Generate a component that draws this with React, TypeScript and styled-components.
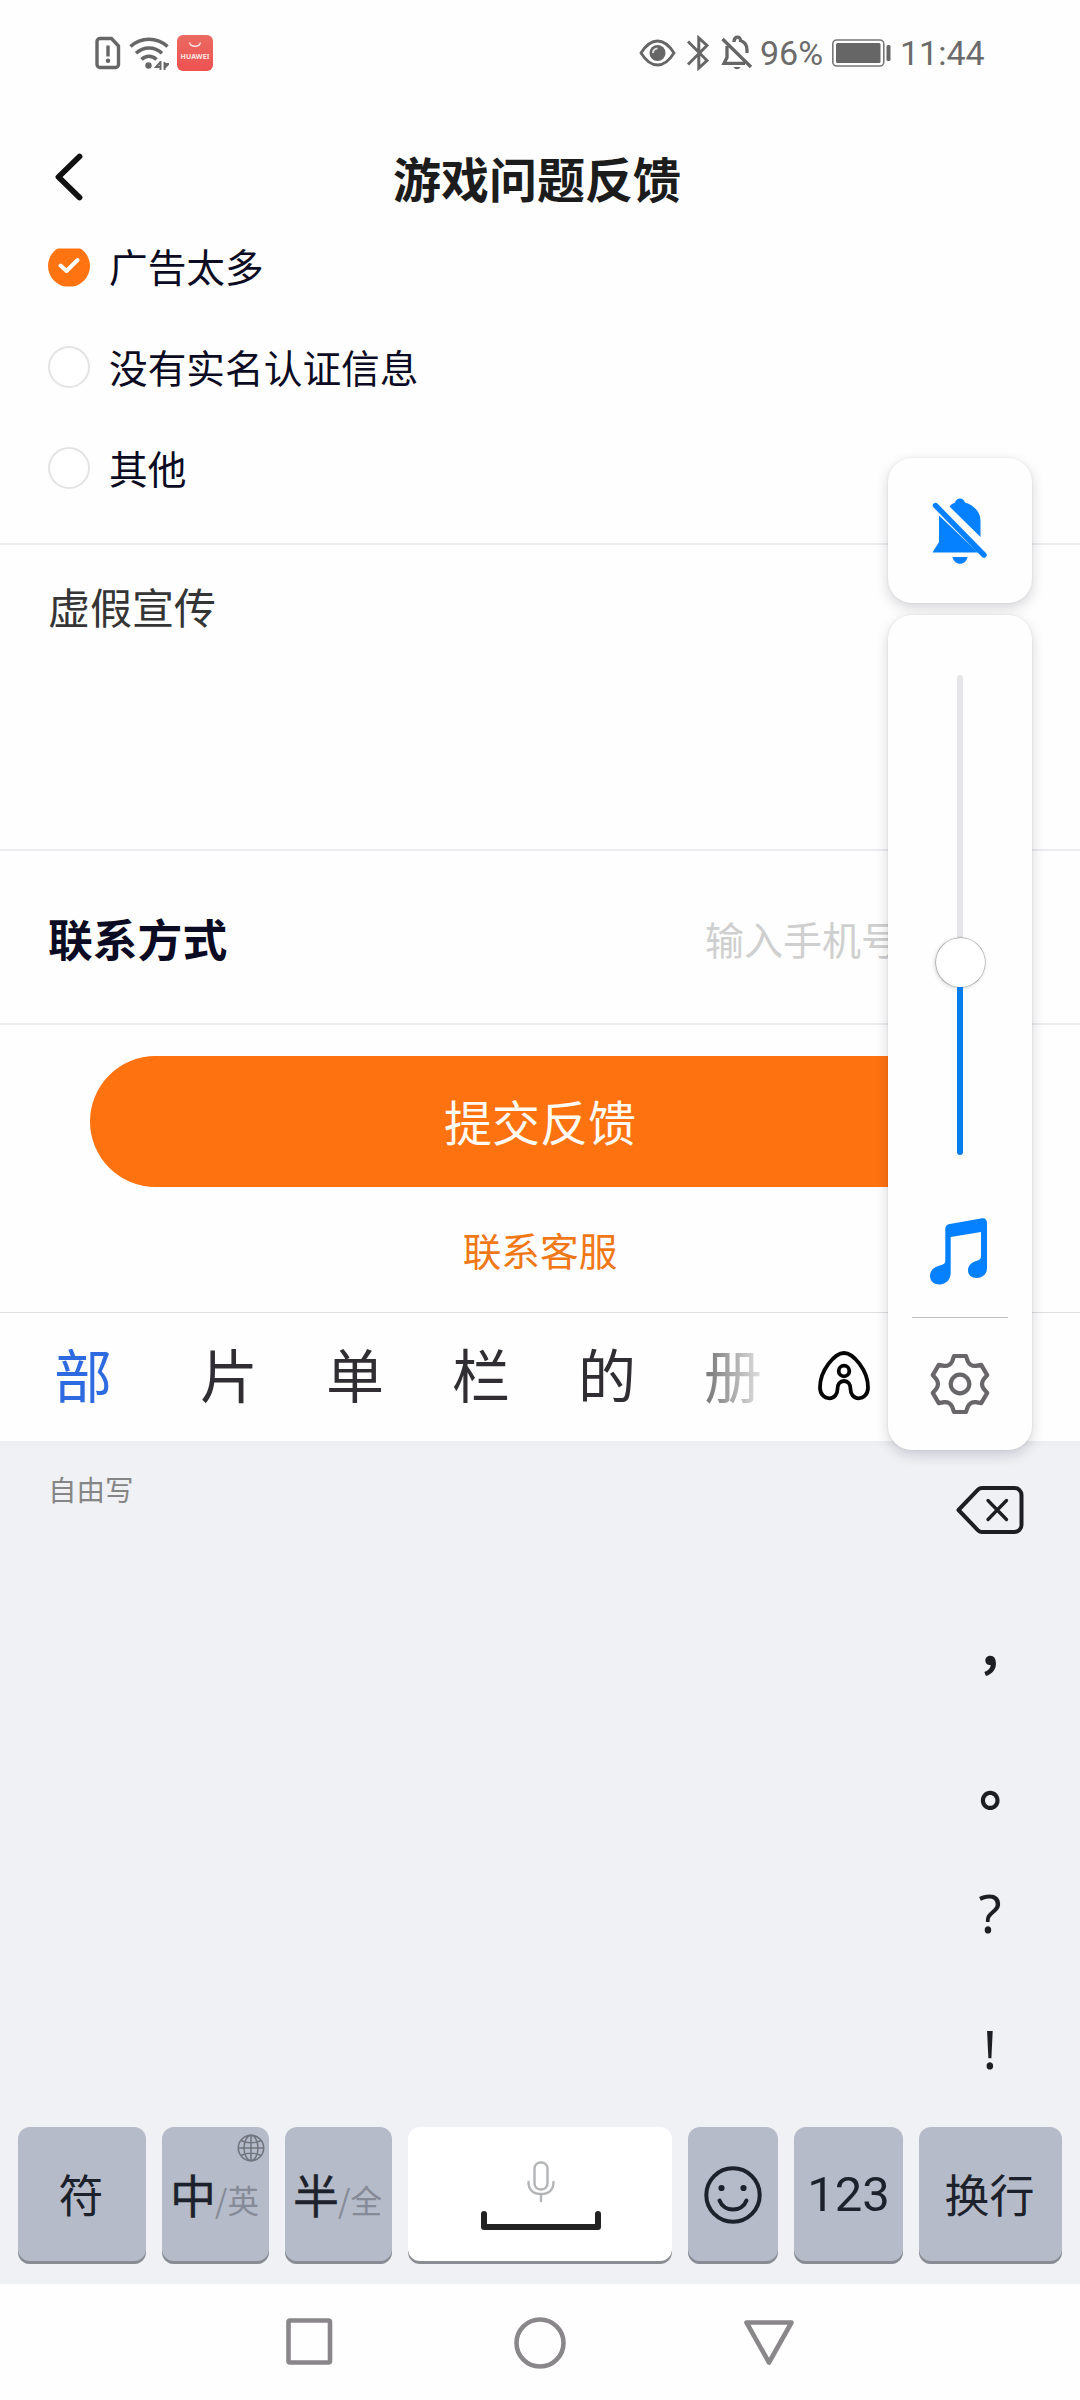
import React from "react";
import styled, { createGlobalStyle } from "styled-components";

const GlobalStyle = createGlobalStyle`
  * { box-sizing: border-box; }
  body { margin: 0; background: #fefefe; }
  svg { display: block; flex: none; }
`;

const Screen = styled.div`
  position: relative;
  width: 1080px;
  height: 2400px;
  display: flex;
  flex-direction: column;
  overflow: hidden;
  background: #fefefe;
  color: #0b0b23;
  font-family: "Noto Sans CJK SC", sans-serif;
`;

/* ---------- status bar ---------- */
const StatusBar = styled.div`
  flex: none;
  height: 106px;
  padding: 0 97px 0 95px;
  display: flex;
  justify-content: space-between;
  align-items: center;
`;
const StatusGroup = styled.div`
  display: flex;
  align-items: center;
`;
const StatusText = styled.span<{ $width: number; $gap: number }>`
  width: ${(p) => p.$width}px;
  margin-left: ${(p) => p.$gap}px;
  font: 400 34px/40px Roboto, sans-serif;
  color: #6b6b6b;
  white-space: nowrap;
`;
const StoreBadge = styled.div`
  width: 36px;
  height: 36px;
  margin-left: 8px;
  border-radius: 6px;
  background: linear-gradient(#ea6a61, #ee5151);
  display: flex;
  flex-direction: column;
  align-items: center;
  color: #fde6e2;
  font: 700 7px/8px "Noto Sans", sans-serif;
  letter-spacing: 0.1px;
`;

/* ---------- header ---------- */
const Header = styled.header`
  flex: none;
  height: 143px;
  padding: 0 54px 2px;
  display: grid;
  grid-template-columns: 30px 1fr 36px;
  align-items: center;
`;
const Title = styled.h1`
  margin: 0;
  text-align: center;
  font-size: 48px;
  line-height: 60px;
  font-weight: 700;
  color: #1c1c1c;
`;

/* ---------- form ---------- */
const Options = styled.div`
  flex: none;
  height: 296px;
  border-bottom: 2px solid #ebecef;
`;
const OptionList = styled.div`
  margin-top: -34px;
  padding-left: 48px;
`;
const Option = styled.label`
  height: 101px;
  display: flex;
  align-items: center;
  gap: 19px;
`;
const OptionText = styled.span`
  padding-bottom: 2px;
  font-size: 38.7px;
  line-height: 32px;
`;
/* the checked option is scrolled slightly under the header, so its top is shaved */
const Radio = styled.span<{ $checked?: boolean }>`
  width: 42px;
  height: 42px;
  border-radius: 50%;
  border: ${(p) => (p.$checked ? "none" : "2.5px solid #e3e3e3")};
  background: ${(p) => (p.$checked ? "#ff7410" : "#fff")};
  clip-path: ${(p) => (p.$checked ? "inset(4px 0 0 0)" : "none")};
  display: flex;
  align-items: center;
  justify-content: center;
`;
const Detail = styled.div`
  flex: none;
  height: 306px;
  padding: 31px 48px;
  border-bottom: 2px solid #ebecef;
  font-size: 42px;
  line-height: 60px;
  color: #353535;
`;
const ContactRow = styled.div`
  flex: none;
  height: 174px;
  padding: 1px 0 0 48px;
  display: flex;
  align-items: center;
  border-bottom: 2px solid #ebecef;
`;
const ContactLabel = styled.span`
  width: 657px;
  font-size: 44.8px;
  font-weight: 700;
`;
const ContactHint = styled.span`
  font-size: 39px;
  color: #cfcfcf;
`;
const Submit = styled.button`
  flex: none;
  width: 900px;
  height: 131px;
  margin: 31px auto 0;
  padding: 0 0 3px;
  border: 0;
  border-radius: 66px;
  background: #ff7210;
  color: #fffaf2;
  font: 400 48px/60px "Noto Sans CJK SC", sans-serif;
`;
const Service = styled.div`
  flex: none;
  height: 125px;
  padding-bottom: 2px;
  display: flex;
  align-items: center;
  justify-content: center;
  font-size: 38.7px;
  color: #f07817;
`;

/* ---------- keyboard ---------- */
const Candidates = styled.div`
  flex: none;
  height: 129px;
  padding: 0 0 8px 20px;
  display: flex;
  align-items: center;
  border-top: 1px solid #dfdfe2;
`;
const Candidate = styled.span<{ $tone?: "active" | "fade" }>`
  width: 126px;
  text-align: center;
  font-size: 58px;
  line-height: 80px;
  color: ${(p) => (p.$tone === "active" ? "#2f6be0" : "#302e32")};
  ${(p) =>
    p.$tone === "fade" &&
    `background: linear-gradient(90deg, #777 28%, #e0e0e0 72%);
     -webkit-background-clip: text;
     background-clip: text;
     color: transparent;`}
`;
const CandidateStrip = styled.div`
  display: flex;
  margin-left: 20px;
`;
const Keyboard = styled.div`
  flex: none;
  height: 843px;
  padding: 0 18px 20px;
  display: flex;
  flex-direction: column;
  justify-content: space-between;
  background: #f0f1f5;
  border-top: 5px solid #edeef2;
`;
const WritingArea = styled.div`
  display: flex;
  justify-content: space-between;
`;
const ModeHint = styled.span`
  padding: 23px 0 0 30px;
  font-size: 28.5px;
  line-height: 40px;
  color: #858585;
`;
const Punctuation = styled.div`
  width: 143px;
  padding: 39px 1px 0 0;
  display: flex;
  flex-direction: column;
  align-items: center;
`;
const Mark = styled.span<{ $top: number; $cjk?: boolean; $shift?: number; $size?: number }>`
  height: 60px;
  margin-top: ${(p) => p.$top}px;
  transform: translateX(${(p) => p.$shift ?? 0}px);
  font: ${(p) => (p.$cjk ? 700 : 400)} ${(p) => p.$size ?? 53}px/60px
    ${(p) => (p.$cjk ? '"Noto Sans CJK SC"' : '"Noto Sans"')}, sans-serif;
  color: #1c1e24;
`;
const KeyRow = styled.div`
  display: flex;
  gap: 16px;
`;
const Key = styled.div<{ $width: number; $light?: boolean }>`
  position: relative;
  width: ${(p) => p.$width}px;
  height: 137px;
  padding-bottom: 3px;
  border-radius: 12px;
  background: ${(p) => (p.$light ? "#fff" : "#b5bbc8")};
  box-shadow: inset 0 -3px 0 #898c93;
  display: flex;
  flex-direction: ${(p) => (p.$light ? "column" : "row")};
  align-items: center;
  justify-content: center;
  white-space: nowrap;
  color: #1c212b;
  font-size: 45px;
  line-height: 60px;
`;
const Glyphs = styled.span`
  padding: 0 2px 1px 0;
`;
const Primary = styled.span`
  padding-bottom: 3px;
  font-size: 46px;
  -webkit-text-stroke: 0.4px #1c212b;
`;
const Digits = styled.span`
  padding-top: 2px;
  font-family: Roboto, sans-serif;
  font-size: 49px;
`;
const Minor = styled.small`
  margin-top: 10px;
  margin-left: -1px;
  padding-right: 2px;
  font-size: 31.5px;
  color: #858a96;
`;
const KeyCorner = styled.span`
  position: absolute;
  top: 7px;
  right: 4px;
`;

/* ---------- system navigation ---------- */
const NavBar = styled.nav`
  flex: 1;
  padding: 1px 284px 0;
  display: flex;
  align-items: center;
  justify-content: space-between;
`;

/* ---------- volume overlay ---------- */
const VolumeOverlay = styled.div`
  position: absolute;
  left: 888px;
  top: 458px;
  width: 144px;
  display: flex;
  flex-direction: column;
  gap: 12px;
`;
const OverlayCard = styled.div<{ $height: number }>`
  height: ${(p) => p.$height}px;
  border-radius: 24px;
  background: #fefeff;
  box-shadow: 0 5px 14px rgba(0, 0, 30, 0.16), 0 0 3px rgba(0, 0, 30, 0.08);
  display: flex;
  flex-direction: column;
  align-items: center;
`;
const BellSlot = styled.div`
  padding-top: 39px;
`;
const Track = styled.div`
  margin-top: 60px;
  height: 481px;
  width: 49px;
  display: flex;
  flex-direction: column;
  align-items: center;
`;
const TrackPart = styled.div<{ $height: number; $filled?: boolean }>`
  width: 6px;
  height: ${(p) => p.$height}px;
  background: ${(p) => (p.$filled ? "#067ded" : "#e6e6e8")};
  border-radius: ${(p) => (p.$filled ? "0 0 3px 3px" : "3px 3px 0 0")};
`;
const Thumb = styled.div`
  width: 49px;
  height: 49px;
  border-radius: 50%;
  background: #fff;
  box-shadow: 0 0 1px 0.5px rgba(0, 0, 0, 0.4), -1px 1px 4px rgba(0, 0, 0, 0.18);
`;
const MusicSlot = styled.div`
  margin-top: 62px;
  padding-right: 3px;
`;
const Rule = styled.div`
  width: 96px;
  height: 1px;
  margin: 32px 0 36px;
  background: #c0c0c4;
`;

/* ---------- icons ---------- */
const SimIcon = () => (
  <svg width="26" height="34" viewBox="0 0 26 34" fill="none" stroke="#666" strokeWidth="3.4">
    <path d="M5 2.5h11.5l7 7.5V28.500a3 3 0 0 1-3 3H5a3 3 0 0 1-3-3V5.500a3 3 0 0 1 3-3Z" />
    <path d="M13 9.500v11" />
    <circle cx="13" cy="24.800" r="2.300" fill="#666" stroke="none" />
  </svg>
);

const WifiSvg = styled.svg`
  margin-left: 8px;
`;
const WifiIcon = () => (
  <WifiSvg width="40" height="34" viewBox="0 0 40 34" fill="none" stroke="#666" strokeWidth="3.600">
    <path d="M1.500 10.500C12 .8 28 .8 38.500 10.500M7 17.200c7.500-7 18.500-7 26 0M12.500 23.500c4.500-4.300 10.500-4.300 15 0" />
    <circle cx="19.500" cy="29.500" r="3.200" fill="#666" stroke="none" />
    <path d="M31.500 25v9M31.500 26l-4.500 5h4.500M35.500 26v8M35.500 32l4-4h-4" strokeWidth="1.900" />
  </WifiSvg>
);

const EyeIcon = () => (
  <svg width="37" height="28" viewBox="0 0 37 28" fill="none" stroke="#666" strokeWidth="2.800">
    <path d="M2 14C7 6 12 2 18.500 2S30 6 35 14c-5 8-10 12-16.500 12S7 22 2 14Z" />
    <circle cx="18.500" cy="14" r="8" fill="#666" stroke="none" />
    <path d="M14 14a4.500 4.500 0 0 1 4.500-4.500" stroke="#ddd" strokeWidth="2" />
  </svg>
);

const BluetoothSvg = styled.svg`
  margin-left: 11px;
`;
const BluetoothIcon = () => (
  <BluetoothSvg width="22" height="36" viewBox="0 0 22 36" fill="none" stroke="#666" strokeWidth="3">
    <path d="M1 6.500 20 25.500 11.800 33V3L20 10.500 1 29.500" />
  </BluetoothSvg>
);

const BellSvg = styled.svg`
  margin-left: 12px;
`;
const BellOffSmall = () => (
  <BellSvg width="32" height="36" viewBox="0 0 32 36" fill="none" stroke="#666" strokeWidth="3.300">
    <path d="M1.500 4 30 32M6 11v11.500L3 28.300H24M13 7C13 .8 19.500 .8 19.500 5.500c4.500 1.500 6.500 5 6.500 9.500v3" />
    <path d="M12.500 32h7c-1.500 3-5.500 3-7 0Z" fill="#666" stroke="none" />
  </BellSvg>
);

const BatterySvg = styled.svg`
  margin-left: 10px;
`;
const BatteryIcon = () => (
  <BatterySvg width="59" height="28" viewBox="0 0 59 28">
    <rect x=".8" y="1" width="51" height="26" rx="4" fill="none" stroke="#777" strokeWidth="1.600" />
    <rect x="4" y="4" width="44.500" height="20" rx="1.500" fill="#666" />
    <rect x="54.500" y="6" width="4" height="16" rx="1.500" fill="#666" />
  </BatterySvg>
);

const BackIcon = () => (
  <svg width="30" height="50" viewBox="0 0 30 50" fill="none" stroke="#111" strokeWidth="5.800" strokeLinecap="round" strokeLinejoin="round">
    <path d="M25.500 4.500 4.500 25l21 20.500" />
  </svg>
);

const CheckIcon = () => (
  <svg width="22" height="17" viewBox="0 0 22 17" fill="none" stroke="#fff" strokeWidth="4" strokeLinecap="round" strokeLinejoin="round">
    <path d="m2.500 8.500 6 5.500 11-11" />
  </svg>
);

const BellOffLarge = () => (
  <svg width="58" height="68" viewBox="0 0 58 68">
    <path
      d="M8 18.500V45L1.500 55.500H47L8 18.500ZM18.500 9.500 49.500 40V24c0-9-6-15.500-15.500-18.500C32.500 0 25.500 0 24 5.500c-2 .8-4 2-5.500 4Z"
      fill="#0580fe"
    />
    <path d="M4.500 8.500 53 58" stroke="#0580fe" strokeWidth="5.400" strokeLinecap="round" />
    <path d="M21.500 60h15c-1.500 9-13.500 9-15 0Z" fill="#0580fe" />
  </svg>
);

const MusicIcon = () => (
  <svg width="58" height="67" viewBox="0 0 58 67" fill="#0580fe">
    <path d="M15.300 11c0-3 1.500-4.500 4.500-5L51 .4c4-.7 6 1 6 5V50c0 6-4.500 10-10.500 10-5 0-8.500-3-8.500-7.500 0-6 4.500-8.500 9-9.800 3-1 4-2 4-4.700V14L20.700 19v36c0 6.500-5 11.500-11 11.500C4 66.500 0 63 0 58c0-5.500 4-9 9-10.300 5-1.200 6.300-2.200 6.300-5.200Z" />
  </svg>
);

const polar = (radius: number, deg: number) => {
  const a = (deg * Math.PI) / 180;
  return `${(30 + radius * Math.sin(a)).toFixed(2)} ${(30 - radius * Math.cos(a)).toFixed(2)}`;
};
const gearPath =
  [0, 60, 120, 180, 240, 300]
    .map(
      (t, i) =>
        `${i ? "L" : "M"}${polar(28.6, t - 12)}L${polar(28.6, t + 12)}L${polar(24, t + 19)}Q${polar(20.5, t + 30)} ${polar(24, t + 41)}`
    )
    .join("") + "Z";

const GearIcon = () => (
  <svg width="60" height="60" viewBox="0 0 60 60" fill="none" stroke="#69666a" strokeWidth="4.200" strokeLinejoin="round">
    <path d={gearPath} />
    <circle cx="30" cy="30" r="9.300" />
  </svg>
);

const ArchSvg = styled.svg`
  margin: 5px 0 0 21px;
`;
const ArchIcon = () => (
  <ArchSvg width="54" height="52" viewBox="0 0 54 52" fill="none" stroke="#050505" strokeWidth="3.800">
    <path d="M27 3C36 3 51 20 51 37.500 51 44 47 48.300 41.500 48.300c-5 0-8-4.300-8-9.300 0-5-2.500-8-6.500-8s-6.500 3-6.500 8c0 5-3 9.300-8 9.300C7 48.300 3 44 3 37.500 3 20 18 3 27 3Z" />
    <circle cx="27" cy="21" r="5.300" />
  </ArchSvg>
);

const BackspaceIcon = () => (
  <svg width="68" height="50" viewBox="0 0 68 50" fill="none" stroke="#1c1e24" strokeLinecap="round" strokeLinejoin="round">
    <path d="M26 3h32.500a7 7 0 0 1 7 7v30a7 7 0 0 1-7 7H26c-2 0-3-.7-4-1.700L2.500 25 22 4.700C23 3.700 24 3 26 3Z" strokeWidth="4" />
    <path d="m32 15.500 18.500 19M50.500 15.500l-18.500 19" strokeWidth="3.300" />
  </svg>
);

const GlobeIcon = () => (
  <svg width="28" height="28" viewBox="0 0 28 28" fill="none" stroke="#70747d" strokeWidth="1.500">
    <circle cx="14" cy="14" r="12.700" />
    <ellipse cx="14" cy="14" rx="7" ry="12.700" />
    <path d="M14 1.300v25.400M1.300 14h25.400M4 6.500c6 3 14 3 20 0M4 21.500c6-3 14-3 20 0" />
  </svg>
);

const MicSvg = styled.svg`
  margin: 2px 0 0 2px;
`;
const MicIcon = () => (
  <MicSvg width="28" height="42" viewBox="0 0 28 42" fill="none" stroke="#b3b4b6" strokeWidth="2.400" strokeLinecap="round">
    <rect x="7.500" y="1.500" width="13" height="27" rx="6" />
    <path d="M1.500 21c0 8 5 12 12.500 12s12.500-4 12.500-12M14 33v7" />
  </MicSvg>
);

const SpaceSvg = styled.svg`
  margin: 8px 0 0 2px;
`;
const SpaceIcon = () => (
  <SpaceSvg width="120" height="19" viewBox="0 0 120 19" fill="none" stroke="#222" strokeWidth="6" strokeLinecap="round" strokeLinejoin="round">
    <path d="M3 3v13h114V3" />
  </SpaceSvg>
);

const SmileIcon = () => (
  <svg width="58" height="59" viewBox="0 -1 58 59" fill="none" stroke="#1c212b" strokeWidth="4" strokeLinecap="round">
    <circle cx="29" cy="29" r="26.700" />
    <circle cx="17.500" cy="22" r="3.100" fill="#1c212b" stroke="none" />
    <circle cx="39.500" cy="22" r="3.100" fill="#1c212b" stroke="none" />
    <path d="M15.500 34.500c4.500 12 22.500 12 27 0" />
  </svg>
);

const NavIcon = ({ children }: { children: React.ReactNode }) => (
  <svg width="54" height="54" viewBox="0 0 54 54" fill="none" stroke="#8a878a" strokeWidth="4.600" strokeLinejoin="round">
    {children}
  </svg>
);

const options = [
  { label: "广告太多", checked: true },
  { label: "没有实名认证信息", checked: false },
  { label: "其他", checked: false },
];

const candidates: { text: string; tone?: "active" | "fade" }[] = [
  { text: "片" },
  { text: "单" },
  { text: "栏" },
  { text: "的" },
  { text: "册", tone: "fade" },
];

export default function App() {
  return (
    <>
      <GlobalStyle />
      <Screen>
        <StatusBar>
          <StatusGroup>
            <SimIcon />
            <WifiIcon />
            <StoreBadge>
              <svg width="14" height="18" viewBox="0 0 14 18" fill="none" stroke="#fde6e2" strokeWidth="1.300">
                <path d="M1.500 7.500c1 5 10 5 11 0" />
              </svg>
              HUAWEI
            </StoreBadge>
          </StatusGroup>
          <StatusGroup>
            <EyeIcon />
            <BluetoothIcon />
            <BellOffSmall />
            <StatusText $width={62} $gap={7}>96%</StatusText>
            <BatteryIcon />
            <StatusText $width={83} $gap={9}>11:44</StatusText>
          </StatusGroup>
        </StatusBar>

        <Header>
          <BackIcon />
          <Title>游戏问题反馈</Title>
        </Header>

        <Options>
          <OptionList>
            {options.map((o) => (
              <Option key={o.label}>
                <Radio $checked={o.checked}>{o.checked && <CheckIcon />}</Radio>
                <OptionText>{o.label}</OptionText>
              </Option>
            ))}
          </OptionList>
        </Options>
        <Detail>虚假宣传</Detail>
        <ContactRow>
          <ContactLabel>联系方式</ContactLabel>
          <ContactHint>输入手机号</ContactHint>
        </ContactRow>
        <Submit>提交反馈</Submit>
        <Service>联系客服</Service>

        <Candidates>
          <Candidate $tone="active">部</Candidate>
          <CandidateStrip>
            {candidates.map((c) => (
              <Candidate key={c.text} $tone={c.tone}>{c.text}</Candidate>
            ))}
          </CandidateStrip>
          <ArchIcon />
        </Candidates>
        <Keyboard>
          <WritingArea>
            <ModeHint>自由写</ModeHint>
            <Punctuation>
              <BackspaceIcon />
              <Mark $top={77} $cjk>,</Mark>
              <Mark $top={78} $cjk $shift={18} $size={58}>。</Mark>
              <Mark $top={73}>?</Mark>
              <Mark $top={76}>!</Mark>
            </Punctuation>
          </WritingArea>
          <KeyRow>
            <Key $width={128}><Glyphs>符</Glyphs></Key>
            <Key $width={107}>
              <Primary>中</Primary><Minor>/英</Minor>
              <KeyCorner><GlobeIcon /></KeyCorner>
            </Key>
            <Key $width={107}>
              <Primary>半</Primary><Minor>/全</Minor>
            </Key>
            <Key $width={264} $light>
              <MicIcon />
              <SpaceIcon />
            </Key>
            <Key $width={90}><SmileIcon /></Key>
            <Key $width={109}><Digits>123</Digits></Key>
            <Key $width={143}><Glyphs>换行</Glyphs></Key>
          </KeyRow>
        </Keyboard>

        <NavBar>
          <NavIcon><rect x="4.500" y="4.500" width="41.500" height="42" rx="1.500" /></NavIcon>
          <NavIcon><circle cx="27" cy="27" r="23.500" /></NavIcon>
          <NavIcon><path d="M4.500 6.500h45L27 46.500Z" /></NavIcon>
        </NavBar>

        <VolumeOverlay>
          <OverlayCard $height={145}>
            <BellSlot><BellOffLarge /></BellSlot>
          </OverlayCard>
          <OverlayCard $height={835}>
            <Track>
              <TrackPart $height={263} />
              <Thumb />
              <TrackPart $height={168} $filled />
            </Track>
            <MusicSlot><MusicIcon /></MusicSlot>
            <Rule />
            <GearIcon />
          </OverlayCard>
        </VolumeOverlay>
      </Screen>
    </>
  );
}
